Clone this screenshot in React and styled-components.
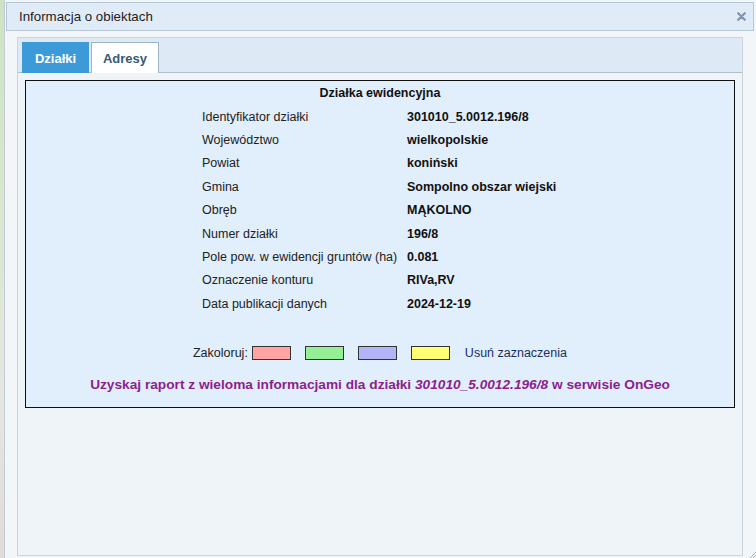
import styled, { createGlobalStyle } from "styled-components";

const GlobalStyle = createGlobalStyle`
  html, body {
    margin: 0;
    padding: 0;
    height: 100%;
  }
  body {
    font-family: "Liberation Sans", Arial, sans-serif;
    background: #dbe6d3;
  }
  #root {
    height: 100%;
  }
`;

const rows = [
  ["Identyfikator działki", "301010_5.0012.196/8"],
  ["Województwo", "wielkopolskie"],
  ["Powiat", "koniński"],
  ["Gmina", "Sompolno obszar wiejski"],
  ["Obręb", "MĄKOLNO"],
  ["Numer działki", "196/8"],
  ["Pole pow. w ewidencji gruntów (ha)", "0.081"],
  ["Oznaczenie konturu", "RIVa,RV"],
  ["Data publikacji danych", "2024-12-19"],
];

const swatches = ["#ffa3a3", "#95f095", "#b3b3f7", "#ffff73"];

function App() {
  return (
    <Page>
      <GlobalStyle />
      <MapStrip />
      <Dialog>
        <TitleBar>
          <Title>Informacja o obiektach</Title>
          <Close>
            <svg width="9" height="9" viewBox="0 0 9 9">
              <path d="M1.2 1.2 L7.8 7.8 M7.8 1.2 L1.2 7.8" stroke="#7d96ae" strokeWidth="2.2" strokeLinecap="round" />
            </svg>
          </Close>
        </TitleBar>
        <Body>
          <TabPanel>
            <TabBar>
              <Tab $active>Działki</Tab>
              <Tab>Adresy</Tab>
            </TabBar>
            <Content>
              <InfoBox>
                <Heading>Działka ewidencyjna</Heading>
                <Table>
                  {rows.map(([label, value]) => (
                    <Row key={label}>
                      <Label>{label}</Label>
                      <Value>{value}</Value>
                    </Row>
                  ))}
                </Table>
                <ColorRow>
                  <span>Zakoloruj:</span>
                  <Swatches>
                    {swatches.map((c) => (
                      <Swatch key={c} $color={c} />
                    ))}
                  </Swatches>
                  <ClearLink>Usuń zaznaczenia</ClearLink>
                </ColorRow>
                <Report>
                  Uzyskaj raport z wieloma informacjami dla działki <i>301010_5.0012.196/8</i> w serwisie OnGeo
                </Report>
              </InfoBox>
            </Content>
          </TabPanel>
        </Body>
        <Grip>
          <svg width="8" height="8" viewBox="0 0 8 8">
            <path d="M8 2 L2 8 M8 5 L5 8" stroke="#a8b4c0" strokeWidth="1" />
          </svg>
        </Grip>
      </Dialog>
    </Page>
  );
}

export default App;

const Page = styled.div`
  display: flex;
  height: 558px;
  width: 756px;
  overflow: hidden;
`;

const MapStrip = styled.div`
  width: 4px;
  background: linear-gradient(180deg, #cfe3c4 0%, #d9e8cf 40%, #e6e6e0 70%, #e0dcd8 100%);
`;

const Dialog = styled.div`
  position: relative;
  flex: 1;
  display: flex;
  flex-direction: column;
  background: #f3f6f9;
  border-left: 1px solid #c3ccd5;
  padding: 2px 2px 0 1px;
`;

const TitleBar = styled.div`
  height: 27px;
  display: flex;
  align-items: center;
  justify-content: space-between;
  padding: 0 7px 0 12px;
  background: #dfebf7;
  border: 1px solid #b6c7d8;
`;

const Title = styled.div`
  font-size: 13.3px;
  color: #1e1e1e;
`;

const Close = styled.div`
  display: flex;
  align-items: center;
`;

const Body = styled.div`
  flex: 1;
  display: flex;
  padding: 6px 11px 2px 11px;
`;

const TabPanel = styled.div`
  flex: 1;
  display: flex;
  flex-direction: column;
  border: 1px solid #cad4dd;
  background: #eff4f8;
`;

const TabBar = styled.div`
  height: 30px;
  display: flex;
  gap: 2px;
  padding: 4px 0 0 4px;
  background: #dde9f5;
  border-bottom: 1px solid #aebfcf;
`;

const Tab = styled.div`
  width: ${(p) => (p.$active ? "65px" : "66px")};
  display: flex;
  align-items: center;
  justify-content: center;
  font-size: 13px;
  font-weight: bold;
  color: ${(p) => (p.$active ? "#ffffff" : "#355a78")};
  background: ${(p) => (p.$active ? "#3d9ad8" : "#ffffff")};
  border: 1px solid ${(p) => (p.$active ? "#3d9ad8" : "#9db3c6")};
  border-bottom: none;
  margin-bottom: -1px;
`;

const Content = styled.div`
  flex: 1;
  padding: 7px 7px;
`;

const InfoBox = styled.div`
  height: 328px;
  box-sizing: border-box;
  background: #e1eefc;
  border: 1.5px solid #111;
  font-size: 12.5px;
  color: #222;
`;

const Heading = styled.div`
  height: 24px;
  display: flex;
  align-items: center;
  justify-content: center;
  font-weight: bold;
  color: #111;
`;

const Table = styled.div`
  display: grid;
  grid-template-columns: 206px 152px;
  justify-content: center;
`;

const Row = styled.div`
  display: contents;
`;

const Label = styled.div`
  height: 23.4px;
  display: flex;
  align-items: center;
  padding-left: 1px;
`;

const Value = styled.div`
  height: 23.4px;
  display: flex;
  align-items: center;
  font-weight: bold;
  color: #111;
  white-space: nowrap;
`;

const ColorRow = styled.div`
  margin-top: 27px;
  height: 20px;
  display: flex;
  align-items: center;
  justify-content: center;
  gap: 4px;
`;

const Swatches = styled.div`
  display: flex;
  gap: 14px;
  margin-right: 11px;
`;

const Swatch = styled.div`
  width: 37px;
  height: 12px;
  background: ${(p) => p.$color};
  border: 1px solid #333;
`;

const ClearLink = styled.span`
  color: #1c2f5c;
`;

const Report = styled.div`
  margin-top: 12px;
  line-height: 20px;
  text-align: center;
  font-size: 13.7px;
  font-weight: bold;
  color: #8e1d8e;
`;

const Grip = styled.div`
  position: absolute;
  right: 0;
  bottom: 0;
  display: flex;
`;
